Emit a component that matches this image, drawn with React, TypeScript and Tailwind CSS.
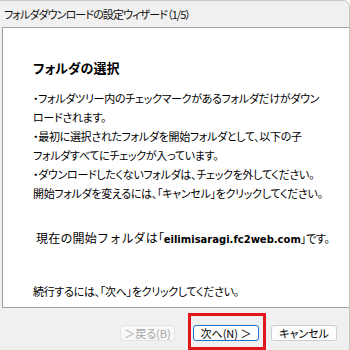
import React from "react";

const jp = "font-['Noto_Sans_CJK_JP','Noto_Sans',sans-serif]";

export default function App() {
  const lines = [
    "・フォルダツリー内のチェックマークがあるフォルダだけがダウン",
    "ロードされます。",
    "・最初に選択されたフォルダを開始フォルダとして、以下の子",
    "フォルダすべてにチェックが入っています。",
    "・ダウンロードしたくないフォルダは、チェックを外してください。",
    "開始フォルダを変えるには、「キャンセル」をクリックしてください。",
  ];
  return (
    <div
      className={`w-[350px] h-[350px] overflow-hidden bg-white ${jp} text-black [font-feature-settings:'palt']`}
    >
      <div className="w-[350px] h-[350px] bg-[#f0f0f0] rounded-tr-[7px] border-r border-t border-[#c8c8c8] flex flex-col">
        <div className="h-[26px] flex items-center pl-[4px] text-[11px] leading-[14px] text-[#111] tracking-[-0.9px]">
          フォルダダウンロードの設定ウィザード（1/5）
        </div>
        <div className="ml-[2px] h-[281px] bg-white border-l border-t border-b border-[#a0a0a0] pl-[30px] pt-[31px] text-[11px] tracking-[-0.3px]">
          <div className="h-[18px] leading-[18px] text-[13px] font-bold tracking-[0px]">フォルダの選択</div>
          <div className="mt-[12px]">
            {lines.map((l, i) => (
              <div key={i} className="h-[19px] leading-[19px] whitespace-nowrap">
                {l}
              </div>
            ))}
          </div>
          <div className="mt-[25px] h-[19px] leading-[19px] whitespace-nowrap pl-[3px]">
            <span className="text-[12px] tracking-[0.2px] [font-feature-settings:normal]">現在の開始フォルダは</span>
            <span className="text-[12px]">「</span>
            <span className="font-bold font-['DejaVu_Sans',sans-serif] text-[10px] tracking-[0px]">eilimisaragi.fc2web.com</span>
            <span>」です。</span>
          </div>
          <div className="mt-[35px] h-[19px] leading-[19px] whitespace-nowrap">
            続行するには、「次へ」をクリックしてください。
          </div>
        </div>
        <div className="flex-1 flex items-start pt-[17px] pl-[120px] text-[11px]">
          <div className="w-[55px] h-[16px] rounded-[3px] border border-[#e3e3e3] bg-[#f7f7f7] text-[#a8a8a8] flex items-center justify-center leading-none">
            ＞戻る(B)
          </div>
          <div className="ml-[13px] -mt-[12px] w-[78px] h-[37px] border-[3px] border-[#e0161c] flex items-start pl-[2px] pt-[9px]">
            <div className="w-[66px] h-[16px] rounded-[3px] border border-[#1a73c8] bg-[#fdfdfd] flex items-center justify-center leading-none">
              次へ(N) ＞
            </div>
          </div>
          <div className="ml-[5px] w-[66px] h-[16px] rounded-[3px] border border-[#cfcfcf] bg-[#fdfdfd] flex items-center justify-center leading-none">
            キャンセル
          </div>
        </div>
      </div>
    </div>
  );
}
